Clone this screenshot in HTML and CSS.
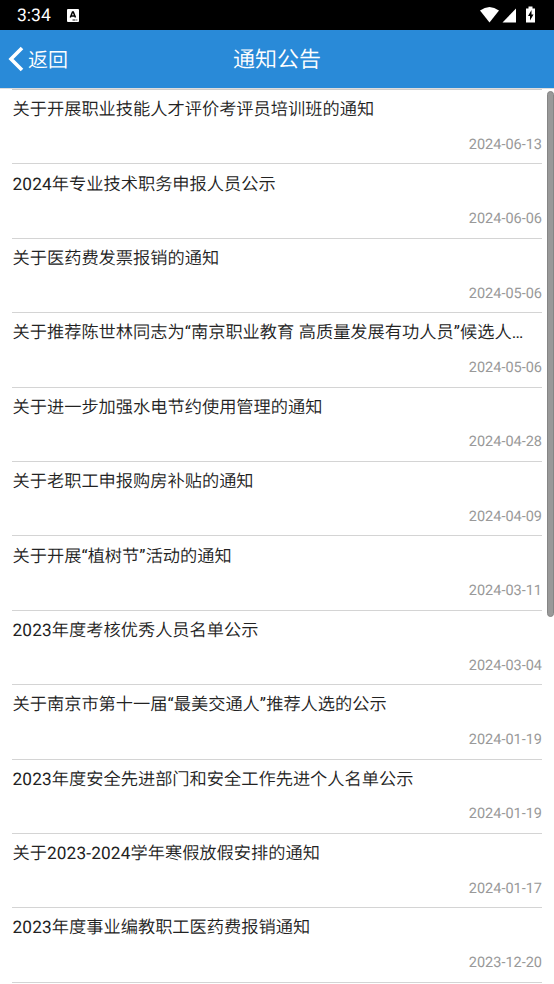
FILE: index.html
```html
<!DOCTYPE html>
<html lang="zh-CN">
<head>
<meta charset="utf-8">
<title>通知公告</title>
<link rel="stylesheet" href="styles.css">
</head>
<body>
<div class="status">
  <span class="clock">3:34</span>
  <svg class="app-icon" width="12" height="13" viewBox="0 0 12 13"><rect width="12" height="13" rx="1" fill="#fff"/><path d="M3.300 8.500 5.500 3h.8l2.200 5.500M4.300 7h3.200" fill="none" stroke="#000" stroke-width="1.500"/><path d="M5.500 11h3M9.300 11h1" stroke="#000" stroke-width=".9"/></svg>
  <svg class="signals" width="58" height="18" viewBox="0 0 58 18"><path d="M0 4.500Q9.500-2.500 19 4.500L9.500 16.500z" fill="#fff"/><path d="M36 2.500v14H22.500z" fill="#fff"/><path d="M46 2.500h2.500V.5h4v2H55v14h-9z" fill="#fff"/><path d="m51.500 4-3.500 6h2v4.500l3.500-6h-2z" fill="#000"/></svg>
</div>
<header class="bar">
  <a class="back"><svg width="16" height="26" viewBox="0 0 16 26"><path d="M14 2 3 13l11 11" fill="none" stroke="#fff" stroke-width="3.600"/></svg><span>返回</span></a>
  <h1 class="title">通知公告</h1>
</header>
<main class="page">
  <ul class="list">
    <li class="item"><h2>关于开展职业技能人才评价考评员培训班的通知</h2><time>2024-06-13</time></li>
    <li class="item"><h2><b>2024</b>年专业技术职务申报人员公示</h2><time>2024-06-06</time></li>
    <li class="item"><h2>关于医药费发票报销的通知</h2><time>2024-05-06</time></li>
    <li class="item"><h2>关于推荐陈世林同志为<b>“</b>南京职业教育<b> </b>高质量发展有功人员<b>”</b>候选人<b>…</b></h2><time>2024-05-06</time></li>
    <li class="item"><h2>关于进一步加强水电节约使用管理的通知</h2><time>2024-04-28</time></li>
    <li class="item"><h2>关于老职工申报购房补贴的通知</h2><time>2024-04-09</time></li>
    <li class="item"><h2>关于开展<b>“</b>植树节<b>”</b>活动的通知</h2><time>2024-03-11</time></li>
    <li class="item"><h2><b>2023</b>年度考核优秀人员名单公示</h2><time>2024-03-04</time></li>
    <li class="item"><h2>关于南京市第十一届<b>“</b>最美交通人<b>”</b>推荐人选的公示</h2><time>2024-01-19</time></li>
    <li class="item"><h2><b>2023</b>年度安全先进部门和安全工作先进个人名单公示</h2><time>2024-01-19</time></li>
    <li class="item"><h2>关于<b>2023-2024</b>学年寒假放假安排的通知</h2><time>2024-01-17</time></li>
    <li class="item"><h2><b>2023</b>年度事业编教职工医药费报销通知</h2><time>2023-12-20</time></li>
  </ul>
  <div class="thumb"></div>
</main>
</body>
</html>
```
FILE: styles.css
```css
* { box-sizing: border-box; }
body { margin: 0; height: 984px; overflow: hidden; background: #fff; font-family: Roboto, "Noto Sans CJK SC", sans-serif; color: #222; text-rendering: geometricPrecision; }
.status { height: 30px; background: #000; color: #fff; display: flex; align-items: center; padding: 0 17px; }
.clock { font-size: 17.5px; line-height: 32px; height: 30px; }
.app-icon { margin-left: 16px; }
.signals { margin: 0 -1px 0 auto; }
.bar { height: 58px; background: #298ad8; color: #fff; display: grid; grid-template-columns: 1fr auto 1fr; align-items: center; font-weight: 350; }
.back { display: flex; align-items: center; gap: 4px; padding-left: 8px; font-size: 20px; }
.back span { margin-top: -2px; }
.title { margin: -3px 0 0; font-size: 22px; font-weight: 350; }
.page { position: relative; height: 896px; border-top: 1px solid #ddd; overflow: hidden; }
.list { list-style: none; margin: 0 12px; padding: 0; border-top: 1px solid #ccc; }
.item { height: 74.4px; border-bottom: 1px solid #d4d4d4; display: flex; flex-direction: column; }
.item h2 { margin: 0; padding: 8.2px 0 0 .5px; font-size: 17.23px; line-height: 25px; font-weight: 350; white-space: nowrap; }
/* Latin digits and punctuation keep the regular weight */
.item b { font-weight: 400; letter-spacing: .15px; }
.item time { align-self: flex-end; margin-top: 11.6px; font-size: 14.5px; line-height: 20px; color: #999; }
.thumb { position: absolute; right: 0; top: 2px; width: 7px; height: 526px; border: 1px solid #858585; border-radius: 4px; background: #999; }
```
